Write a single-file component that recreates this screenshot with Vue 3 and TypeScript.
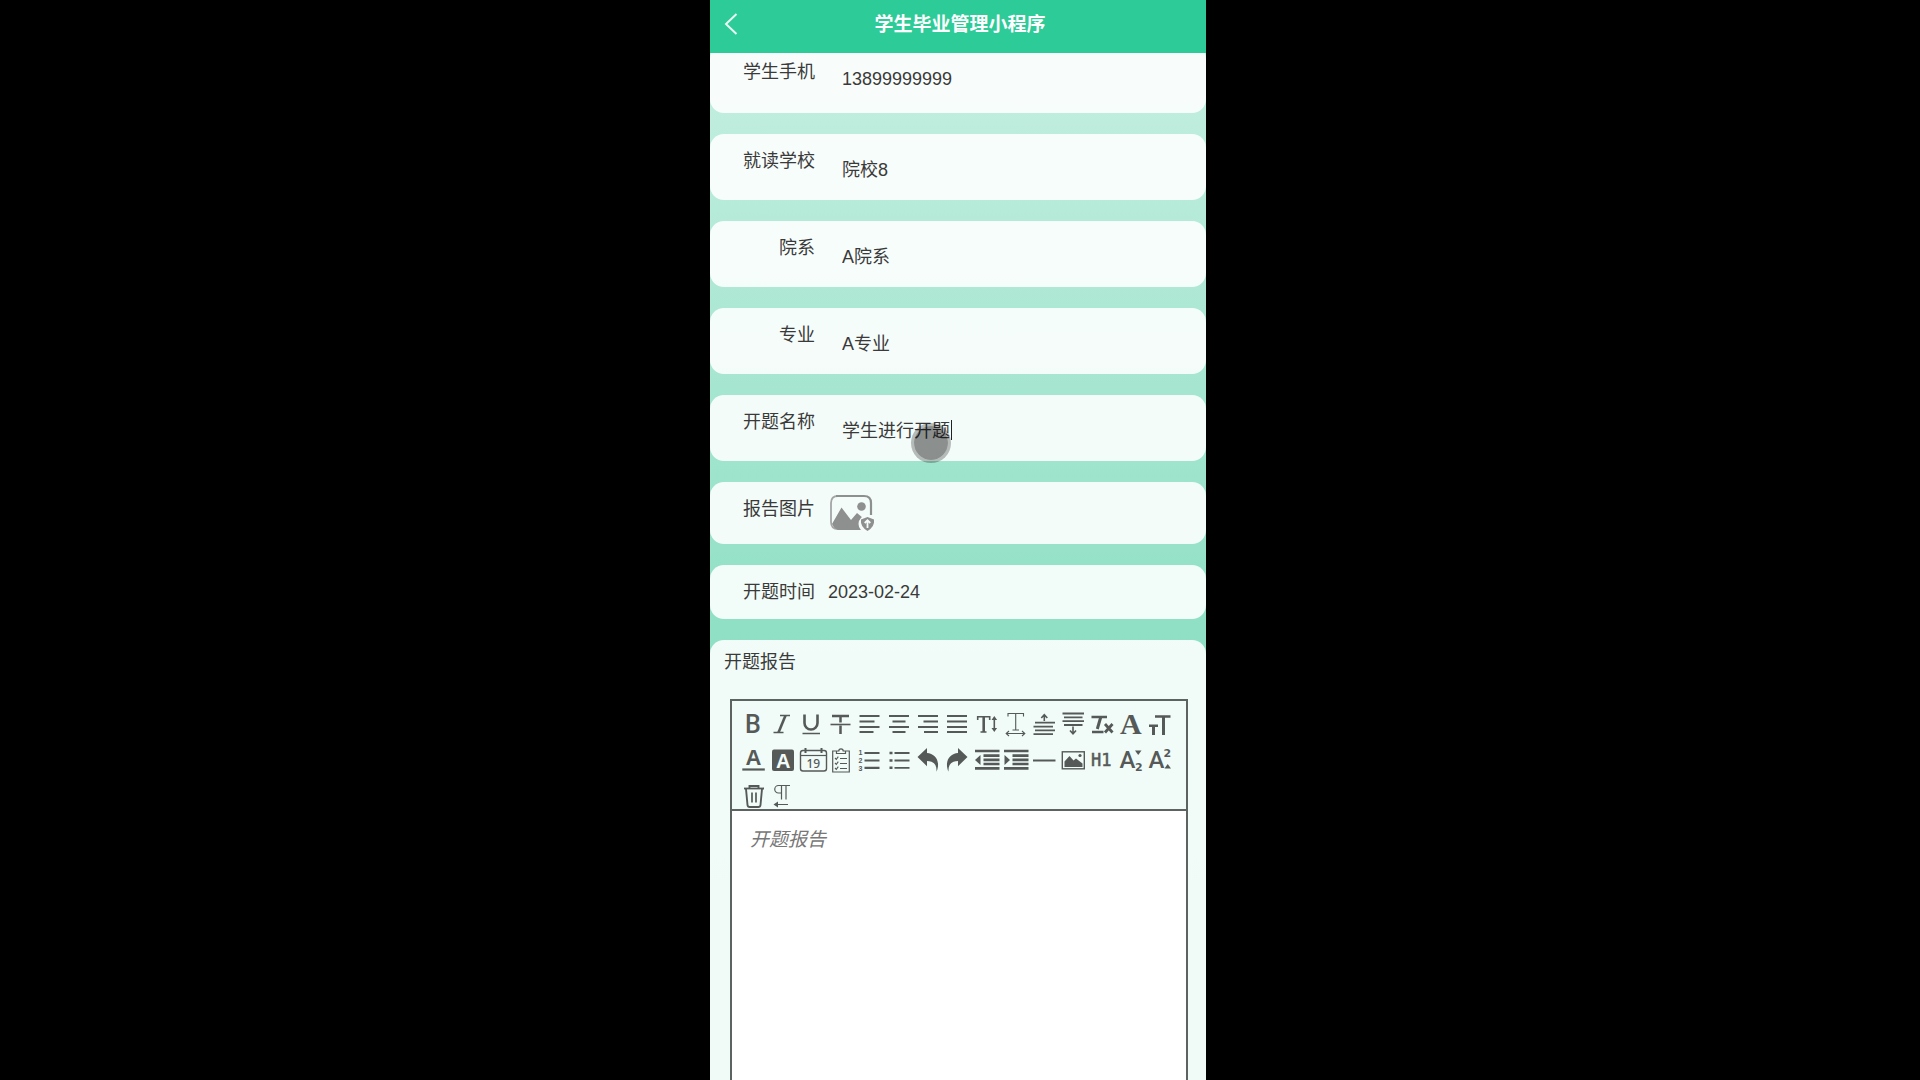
<script setup lang="ts">
import { ref } from 'vue'

interface Field {
  id: string
  label: string
  value: string
  active?: boolean
}

const fields = ref<Field[]>([
  { id: 'phone', label: '学生手机', value: '13899999999' },
  { id: 'school', label: '就读学校', value: '院校8' },
  { id: 'department', label: '院系', value: 'A院系' },
  { id: 'major', label: '专业', value: 'A专业' },
  { id: 'topic', label: '开题名称', value: '学生进行开题', active: true },
])
const date = ref('2023-02-24')
const report = ref('')

interface Tool {
  name: string
  svg: string
}

const tools: Tool[] = [
  { name: '加粗', svg: '<text x="6" y="23" font-family="Roboto" font-weight="500" font-size="25" class="f">B</text>' },
  { name: '斜体', svg: '<path d="M12 5.5h10M5.5 22.500h10" stroke-width="1.500"/><path d="M17.500 5.500L10.500 22.500" stroke-width="2.600"/>' },
  { name: '下划线', svg: '<path d="M7.500 4.500v8.500a6 6 0 0 0 13 0V4.500" stroke-width="2.600"/><path d="M5.500 23.500h17.500" stroke-width="1.500"/>' },
  { name: '删除线', svg: '<path d="M6 6h17M14.500 6v6.500M14.500 15.500v8.500" stroke-width="2.500"/><path d="M4.500 14.500h20" stroke-width="1.600"/>' },
  { name: '左对齐', svg: '<path d="M4.500 6h20M4.500 11.500h15M4.500 17h20M4.500 22h14" stroke-width="2.200"/>' },
  { name: '居中', svg: '<path d="M5 6h20M8.500 11.500h13M5 17h20M8.500 22h13" stroke-width="2.200"/>' },
  { name: '右对齐', svg: '<path d="M5 6h20M10.500 11.500h14.500M5 17h20M11 22h14" stroke-width="2.200"/>' },
  { name: '两端对齐', svg: '<path d="M5 6h20M5 11.500h20M5 17h20M5 22h20" stroke-width="2.200"/>' },
  { name: '行高', svg: '<path d="M5.700 10V6.700h12V10M8.500 22h6" stroke-width="1.600"/><path d="M11.700 6.500V22" stroke-width="2.600"/><path d="M22.300 8v12" stroke-width="1.600"/><path d="M19.500 10l2.800-4 2.800 4zM19.500 18l2.800 4 2.800-4z" class="f"/>' },
  { name: '字间距', svg: '<path d="M7 6.500V3.500h15.500v3M14.700 3.500V20M11.500 20h6.500M5.500 23.500h18M8 21l-2.800 2.500L8 26M21 21l2.800 2.500L21 26" stroke-width="1.100"/>' },
  { name: '段前距', svg: '<path d="M5 12.700h20M3.500 16.600h19.500M5 20.400h20M3.500 24.200h19.500" stroke-width="1.800"/><path d="M14.300 11V5.500M11.300 8l3-3.300 3 3.300" stroke-width="1.600"/>' },
  { name: '段后距', svg: '<path d="M3.500 3.500h21.500M5 7.400h18.500M3.500 11.200h21.500M5 15h18.500" stroke-width="1.800"/><path d="M14 16.500v6.500M11 20.500l3 3.300 3-3.300" stroke-width="1.600"/>' },
  { name: '清除格式', svg: '<path d="M3.500 7h15.500M4 22h11.500" stroke-width="2.600"/><path d="M12.800 7l-3.500 12" stroke-width="3"/><path d="M17 14l7.500 8.500M24.500 14l-7.500 8.500" stroke-width="2.800"/>' },
  { name: '字体', svg: '<text x="3" y="24" font-family="Liberation Serif" font-weight="700" font-size="30" class="f">A</text>' },
  { name: '字号', svg: '<path d="M9 6.500h15.500M3 15.800h9" stroke-width="2.600"/><path d="M17.500 6.500v18.500M7.500 15.800v9.200" stroke-width="3"/>' },
  { name: '文字颜色', svg: '<text x="6.500" y="19" font-family="Liberation Sans" font-weight="700" font-size="22" class="f">A</text><path d="M3.300 23.500h22.500" stroke-width="2.200"/>' },
  { name: '背景颜色', svg: '<rect x="4" y="3.500" width="22" height="21.500" rx="2" class="f"/><text x="8" y="21.500" font-family="Liberation Sans" font-weight="700" font-size="20" fill="#f3fcf9" stroke="none">A</text>' },
  { name: '日期', svg: '<rect x="3.500" y="4.500" width="26" height="20.500" rx="2.500" stroke-width="1.400"/><path d="M3.500 9.500h26" stroke-width="1.200"/><path d="M8.500 2v5M24.500 2v5" stroke-width="2"/><text x="9.500" y="21.500" font-family="Noto Sans" font-weight="500" font-size="12" class="f">19</text>' },
  { name: '待办', svg: '<path d="M11 5H6.700v21h16.600V5H19M10.500 7.500V5h2.300a2.200 2.200 0 0 1 4.400 0h2.300v2.500z" stroke-width="1.200"/><path d="M9 12l1.300 1.300 2-2.600M9 17l1.300 1.300 2-2.600M9 22l1.300 1.300 2-2.600M14 12.500h7M14 17.500h7M14 22.500h7" stroke-width="1.100"/>' },
  { name: '有序列表', svg: '<path d="M9.500 7h15M9.500 14.500h15M9.500 21.800h15" stroke-width="2.200"/><g font-family="Liberation Sans" font-weight="700" font-size="7" class="f"><text x="3.500" y="9">1</text><text x="3.500" y="17">2</text><text x="3.500" y="25">3</text></g>' },
  { name: '无序列表', svg: '<path d="M10.500 7h15M10.500 14.500h15M10.500 21.800h15" stroke-width="1.800"/><path d="M5.500 7h3M5.500 14.500h3M5.500 21.800h3" stroke-width="2.600"/>' },
  { name: '撤销', svg: '<path d="M4.500 11L14 2v5c8 .500 14 8 9.500 18.700C24 18 20 15 14 15v5.200z" class="f"/>' },
  { name: '重做', svg: '<path d="M25.500 11L16 2v5c-8 .500-14 8-9.500 18.700C6 18 10 15 16 15v5.200z" class="f"/>' },
  { name: '减少缩进', svg: '<path d="M3 5h24.500M3 22.300h24.500M11.500 9.600h16M11.500 13.800h16M11.500 18h16" stroke-width="2.700"/><path d="M8.500 9v10L3 14z" class="f"/>' },
  { name: '增加缩进', svg: '<path d="M3 5h24.500M3 22.300h24.500M11.500 9.600h16M11.500 13.800h16M11.500 18h16" stroke-width="2.700"/><path d="M3.500 9v10L9 14z" class="f"/>' },
  { name: '分割线', svg: '<path d="M3 14.500h22.500" stroke-width="2"/>' },
  { name: '插入图片', svg: '<rect x="3.300" y="5.800" width="22" height="17" stroke-width="1.400"/><path d="M5.500 21v-5.500l5-5.500 4 4.500 2.500-2 6.500 5V21z" class="f"/><circle cx="21" cy="9.500" r="1.600" class="f"/>' },
  { name: '标题', svg: '<text x="3" y="20" font-family="DejaVu Sans Mono" font-size="17" class="f bolder">H1</text>' },
  { name: '下标', svg: '<text x="2.500" y="22" font-family="Roboto" font-size="24" font-weight="500" class="f">A</text><text x="18" y="25" font-family="DejaVu Sans" font-weight="700" font-size="11" class="f">2</text><path d="M18 4.500h6.500l-3.300 4.500z" class="f"/>' },
  { name: '上标', svg: '<text x="2.500" y="22" font-family="Roboto" font-size="24" font-weight="500" class="f">A</text><text x="17.500" y="11" font-family="DejaVu Sans" font-weight="700" font-size="11" class="f">2</text><path d="M18.500 22.500h6.500l-3.300-4.500z" class="f"/>' },
  { name: '清空', svg: '<path d="M5 6.500h20" stroke-width="1.800"/><path d="M10.500 6.500V4h9v2.500M7 7l1.500 16q.2 2 2.200 2h8.600q2 0 2.200-2L23 7" stroke-width="1.900"/><path d="M13 10.500v10M17 10.500v10" stroke-width="1.700"/>' },
  { name: '文字方向', svg: '<path d="M22 3.500H10.500a3.600 3.600 0 0 0 0 7.500h3M13.500 3.500v14M18 3.500v14M20 22.500H7.500" stroke-width="1.200"/><path d="M10 19.500l-4.500 3 4.500 3z" class="f"/>' },
]
</script>

<template>
  <div class="page">
    <main class="phone">
      <header class="bar">
        <button class="back" type="button" aria-label="返回">
          <svg width="14" height="24" viewBox="0 0 14 24"><path d="M12.500 1L2 11l10.500 10" /></svg>
        </button>
        <h1>学生毕业管理小程序</h1>
      </header>

      <form class="form" @submit.prevent>
        <div v-for="f in fields" :key="f.id" class="card">
          <label class="label" :for="f.id">{{ f.label }}</label>
          <div class="field">
            <input :id="f.id" v-model="f.value" type="text" />
            <span v-if="f.active" class="caret"></span>
            <span v-if="f.active" class="touch"></span>
          </div>
        </div>

        <div class="card card-image">
          <span class="label">报告图片</span>
          <button class="upload" type="button" aria-label="上传图片">
            <svg width="48" height="40" viewBox="0 0 48 40">
              <path d="M14 37H10q-7 0-7-7V11q0-7 7-7" fill="none" stroke="#a4a6a6" stroke-width="1.800" />
              <path d="M8 4h28q7 0 7 7v12" fill="none" stroke="#8e8f8f" stroke-width="2.200" />
              <path d="M4 32l9.500-16.500L23 28l6-7 6 5v12H12q-5 0-8-6z" fill="#8e8f8f" />
              <circle cx="33.500" cy="14.500" r="4.300" fill="#8e8f8f" />
              <circle cx="39.500" cy="32" r="9" fill="#f5fcfa" />
              <path d="M33 27.500l6.500-2.500 6.500 2.500q1 7-6.500 11.500-7.500-4.500-6.500-11.500z" fill="#8e8f8f" />
              <path d="M39.500 36v-7M36.700 31l2.800-2.800 2.800 2.800" fill="none" stroke="#f5fcfa" stroke-width="1.800" />
            </svg>
          </button>
        </div>

        <div class="card card-date">
          <label class="label" for="date">开题时间</label>
          <input id="date" v-model="date" class="date" type="text" readonly />
        </div>

        <div class="card card-report">
          <label class="report-label" for="report">开题报告</label>
          <div class="editor">
            <div class="tools">
              <button v-for="t in tools" :key="t.name" type="button" :aria-label="t.name">
                <svg width="28" height="28" viewBox="0 0 28 28" v-html="t.svg"></svg>
              </button>
            </div>
            <textarea id="report" v-model="report" placeholder="开题报告"></textarea>
          </div>
        </div>
      </form>
    </main>
  </div>
</template>

<style>
body {
  background: #000;
}
</style>

<style scoped>
.page {
  height: 100vh;
  padding-right: 4px;
  overflow: hidden;
  background: #000;
  font-family: "Liberation Sans", "Noto Sans CJK SC", sans-serif;
  font-size: 18px;
  color: #3a3a3a;
}
.page * {
  box-sizing: border-box;
}
.phone {
  display: flex;
  flex-direction: column;
  width: 100%;
  max-width: 496px;
  height: 100%;
  margin: 0 auto;
  overflow: hidden;
  background: linear-gradient(#c9f0e3, #90e0c5 58%, #80dabc);
}
.bar {
  position: relative;
  z-index: 1;
  flex: none;
  display: grid;
  grid-template-columns: 48px 1fr 44px;
  align-items: center;
  height: 53px;
  padding-bottom: 4px;
  background: #2dcb97;
}
.bar h1 {
  margin: 0;
  font-size: 19px;
  line-height: 28px;
  font-weight: 700;
  text-align: center;
  color: #fff;
}
button {
  padding: 0;
  border: 0;
  background: none;
  font: inherit;
  color: inherit;
}
.back {
  display: flex;
  padding-left: 14px;
}
.back path {
  fill: none;
  stroke: #e8faf3;
  stroke-width: 2;
}
.form {
  flex: 1;
  display: flex;
  flex-direction: column;
  gap: 21px;
  min-height: 0;
  margin-top: -8px;
}
.card {
  flex: none;
  display: flex;
  align-items: flex-start;
  min-height: 66px;
  border-radius: 14px;
  background: rgba(255, 255, 255, 0.88);
}
.card:first-child {
  min-height: 68px;
}
.label {
  width: 118px;
  padding-right: 13px;
  line-height: 54px;
  text-align: right;
}
input,
textarea {
  display: block;
  width: 100%;
  margin: 0;
  border: 0;
  outline: 0;
  background: none;
  font: inherit;
  color: inherit;
}
.field {
  position: relative;
  flex: 1;
  margin-top: 13px;
}
.field input {
  height: 42px;
  padding: 0 14px;
}
.caret {
  position: absolute;
  top: 12px;
  left: 123px;
  width: 1px;
  height: 20px;
  background: #222;
}
.touch {
  position: absolute;
  top: 15px;
  left: 83px;
  width: 40px;
  height: 40px;
  border: 3px solid rgba(0, 0, 0, 0.26);
  border-radius: 50%;
  background: rgba(0, 0, 0, 0.43);
  background-clip: padding-box;
}
.card-image {
  min-height: 62px;
}
.upload {
  margin-top: 10px;
}
.upload svg {
  display: block;
}
.card-date {
  min-height: 54px;
}
.date {
  flex: 1;
  height: 54px;
  padding: 0;
}
.card-report {
  flex: 1;
  flex-direction: column;
  align-items: stretch;
  min-height: 0;
  border-radius: 14px 14px 0 0;
}
.report-label {
  flex: none;
  padding-left: 14px;
  line-height: 44px;
}
.editor {
  flex: 1;
  display: flex;
  flex-direction: column;
  margin: 15px 18px 0 20px;
  border: 2px solid #5c6361;
  border-bottom: 0;
}
.tools {
  display: grid;
  grid-template-columns: repeat(15, 1fr);
  grid-template-rows: 28px 28px 27px;
  row-gap: 8px;
  padding: 9px 11px 0 6px;
  border-bottom: 2px solid #5c6361;
}
.tools button {
  display: flex;
  justify-content: center;
  height: 28px;
}
.tools svg {
  flex: none;
  overflow: visible;
  fill: none;
  stroke: #555a58;
}
.tools :deep(.f) {
  fill: #555a58;
  stroke: none;
}
.tools :deep(.bolder) {
  stroke: #555a58;
  stroke-width: 0.5px;
}
textarea {
  flex: 1;
  padding: 15px 18px;
  resize: none;
  background: #fff;
  font-size: 19px;
  line-height: 28px;
}
textarea::placeholder {
  font-style: italic;
  color: #777;
  opacity: 1;
}
</style>
